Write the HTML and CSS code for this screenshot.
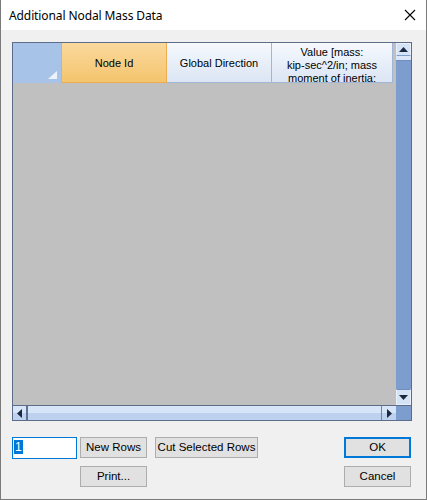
FILE: index.html
```html
<!DOCTYPE html>
<html>
<head>
<meta charset="utf-8">
<link rel="stylesheet" href="styles.css">
</head>
<body>
<div class="window">
  <div class="titlebar">
    <span class="title">Additional Nodal Mass Data</span>
    <svg class="close" width="12" height="12" viewBox="0 0 12 12"><path d="M1 1 L11 11 M11 1 L1 11" stroke="#000" stroke-width="1.1" fill="none"/></svg>
  </div>
  <div class="client">
    <div class="grid">
      <div class="main">
        <div class="header">
          <div class="hcell corner"><svg class="corner-tri" width="9" height="8" viewBox="0 0 9 8"><path d="M9 0 L9 8 L0 8 Z" fill="#eef3fb"/></svg></div>
          <div class="hcell node">Node Id</div>
          <div class="hcell dir">Global Direction</div>
          <div class="hcell val">Value [mass:<br>kip-sec^2/in; mass<br>moment of inertia:</div>
        </div>
        <div class="body"></div>
      </div>
      <div class="vscroll">
        <div class="sbtn vbtn"><svg width="9" height="5" viewBox="0 0 9 5"><path d="M0 5 L4.5 0 L9 5 Z" fill="#1c2740"/></svg></div>
        <div class="vthumb"></div>
        <div class="vtrack"></div>
        <div class="sbtn vbtn"><svg width="9" height="5" viewBox="0 0 9 5"><path d="M0 0 L9 0 L4.5 5 Z" fill="#1c2740"/></svg></div>
      </div>
      <div class="hscroll">
        <div class="sbtn hbtn left"><svg width="5" height="9" viewBox="0 0 5 9"><path d="M5 0 L5 9 L0 4.5 Z" fill="#1c2740"/></svg></div>
        <div class="hthumb"></div>
        <div class="sbtn hbtn right"><svg width="5" height="9" viewBox="0 0 5 9"><path d="M0 0 L5 4.5 L0 9 Z" fill="#1c2740"/></svg></div>
      </div>
      <div class="sizebox"></div>
    </div>
    <div class="controls">
      <div class="left">
        <div class="row">
          <div class="input"><span class="sel">1</span></div>
          <button class="btn">New Rows</button>
          <button class="btn cut">Cut Selected Rows</button>
        </div>
        <div class="row second">
          <button class="btn">Print...</button>
        </div>
      </div>
      <div class="right">
        <button class="btn ok">OK</button>
        <button class="btn">Cancel</button>
      </div>
    </div>
  </div>
</div>
</body>
</html>
```

FILE: styles.css
```css
html, body {
  margin: 0;
  padding: 0;
  background: #f0f0f0;
}
.window {
  width: 427px;
  height: 500px;
  box-sizing: border-box;
  border: 1px solid #7a7a7a;
  border-top: none;
  background: #f0f0f0;
  display: flex;
  flex-direction: column;
  font-family: "Liberation Sans", Arial, sans-serif;
  font-size: 11px;
  color: #000;
}
.titlebar {
  height: 30px;
  background: #fff;
  display: flex;
  align-items: center;
  justify-content: space-between;
  padding: 0 10px 0 8px;
  flex: none;
}
.title {
  font-family: "Noto Sans", "Open Sans", sans-serif;
  font-size: 12px;
  color: #000;
  letter-spacing: -0.1px;
  padding-top: 1px;
}
.close {
  display: block;
}
.client {
  flex: 1;
  padding: 12px 14px 0 11px;
}
.grid {
  width: 400px;
  height: 379px;
  box-sizing: border-box;
  border: 1px solid #5d6c88;
  display: grid;
  grid-template-columns: 383px 15px;
  grid-template-rows: 362px 15px;
  background: #c0c0c0;
}
.main {
  display: flex;
  flex-direction: column;
  overflow: hidden;
}
.header {
  display: flex;
  height: 40px;
  flex: none;
}
.hcell {
  box-sizing: border-box;
  height: 40px;
  display: flex;
  align-items: center;
  justify-content: center;
  text-align: center;
  line-height: 13px;
  padding-top: 1px;
  overflow: hidden;
  border-right: 1px solid #9fb6d5;
  border-bottom: 1px solid #9fb6d5;
  background: linear-gradient(#f6f9fe, #dbe5f4);
}
.corner {
  width: 48px;
  background: #a8c3e8;
  border: none;
  position: relative;
}
.corner-tri {
  position: absolute;
  right: 4px;
  bottom: 4px;
}
.node {
  width: 106px;
  background: linear-gradient(#fad99d, #f4c46d);
  border: 1px solid #eeae4f;
  border-top: none;
}
.dir {
  width: 105px;
}
.val {
  width: 121px;
  align-items: flex-start;
  padding-top: 3px;
}
.body {
  flex: 1;
  background: #c0c0c0;
}
.vscroll {
  display: flex;
  flex-direction: column;
  background: #7c9dcd;
}
.sbtn {
  box-sizing: border-box;
  background: #d5e3f7;
  display: flex;
  align-items: center;
  justify-content: center;
  flex: none;
}
.vbtn {
  height: 13px;
  border: 1px solid #e9f0fb;
  border-bottom-color: #7c9dcd;
}
.vbtn:last-child {
  height: 16px;
  border-color: #e9f0fb;
  border-top: 1px solid #6f8fc0;
}
.vthumb {
  height: 4px;
  background: #dbe7f8;
  border-bottom: 1px solid #6f8fc0;
  flex: none;
}
.vtrack {
  flex: 1;
}
.hscroll {
  display: flex;
  background: linear-gradient(#d7e5f8 0, #d7e5f8 50%, #bed2ef 50%, #bed2ef 100%);
  border-top: 1px solid #5d6c88;
  box-sizing: border-box;
}
.hbtn {
  width: 15px;
  height: 100%;
  background: transparent;
}
.hbtn.left {
  border-right: 2px solid #5f7196;
}
.hbtn.right {
  border-left: 1px solid #6f82a6;
}
.hthumb {
  flex: 1;
}
.sizebox {
  background: #7c9dcd;
  border-top: 1px solid #5d6c88;
}
.controls {
  display: flex;
  justify-content: space-between;
  margin-top: 16px;
  padding-right: 1px;
}
.left {
  display: flex;
  flex-direction: column;
  gap: 7px;
}
.row {
  display: flex;
  align-items: flex-start;
}
.row.second {
  padding-left: 68px;
}
.input {
  width: 65px;
  height: 22px;
  box-sizing: border-box;
  border: 1px solid #0078d7;
  background: #fff;
  margin-right: 3px;
  padding: 2px 0 0 1px;
}
.sel {
  display: inline-block;
  background: #0078d7;
  color: #fff;
  line-height: 14px;
  padding: 0 1px;
  font-family: "Liberation Sans", Arial, sans-serif;
  font-size: 12px;
}
.btn {
  width: 67px;
  height: 21px;
  box-sizing: border-box;
  border: 1px solid #adadad;
  background: #e1e1e1;
  font-family: "Liberation Sans", Arial, sans-serif;
  font-size: 11.5px;
  color: #000;
  padding: 0;
  margin: 0;
  line-height: 19px;
}
.btn.cut {
  width: 103px;
  margin-left: 8px;
}
.right {
  display: flex;
  flex-direction: column;
  gap: 8px;
}
.btn.ok {
  border: 2px solid #0078d7;
  line-height: 17px;
}
```
